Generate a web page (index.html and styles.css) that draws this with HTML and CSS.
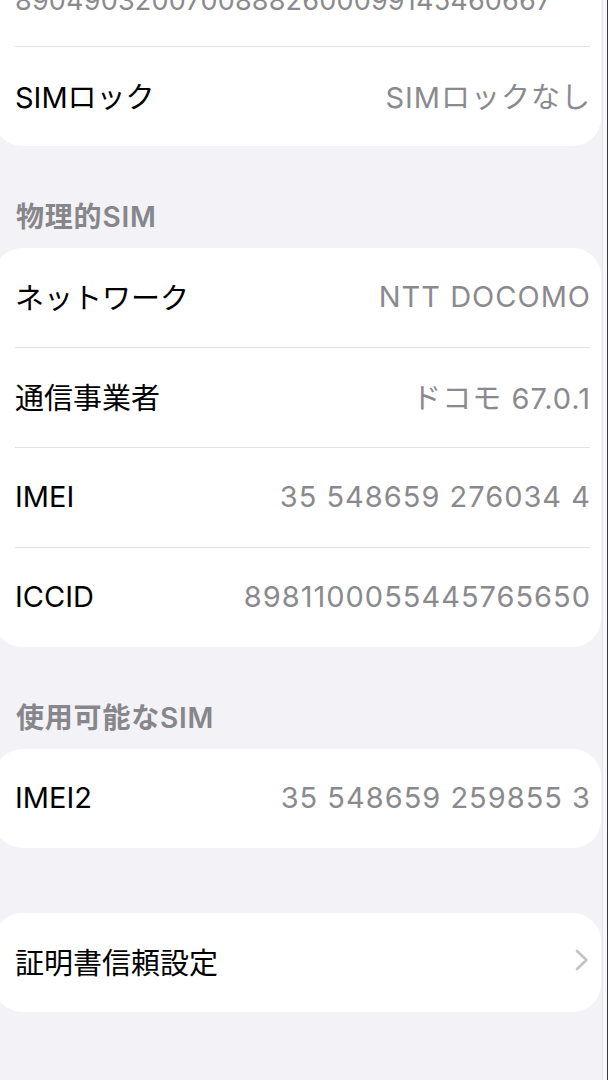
FILE: index.html
```html
<!DOCTYPE html>
<html lang="ja">
<head>
<meta charset="utf-8">
<title>情報</title>
<link rel="stylesheet" href="styles.css">
</head>
<body>
<div class="page">
  <div class="card card-first">
    <div class="eid-tail">89049032007008882600099145460667</div>
    <div class="sep"></div>
    <div class="row"><span class="label">SIMロック</span><span class="value">SIMロックなし</span></div>
  </div>

  <div class="header">物理的SIM</div>
  <div class="card">
    <div class="row"><span class="label">ネットワーク</span><span class="value">NTT DOCOMO</span></div>
    <div class="sep"></div>
    <div class="row"><span class="label">通信事業者</span><span class="value">ドコモ 67.0.1</span></div>
    <div class="sep"></div>
    <div class="row"><span class="label">IMEI</span><span class="value">35 548659 276034 4</span></div>
    <div class="sep"></div>
    <div class="row"><span class="label">ICCID</span><span class="value">8981100055445765650</span></div>
  </div>

  <div class="header">使用可能なSIM</div>
  <div class="card">
    <div class="row"><span class="label">IMEI2</span><span class="value">35 548659 259855 3</span></div>
  </div>

  <div class="spacer"></div>
  <div class="card">
    <div class="row"><span class="label">証明書信頼設定</span>
      <svg class="chev" width="14" height="22" viewBox="0 0 14 22"><path d="M2 2 L11.5 11 L2 20" fill="none" stroke="#c4c4c7" stroke-width="2.6" stroke-linecap="round" stroke-linejoin="round"/></svg>
    </div>
  </div>
</div>
<div class="edge"></div>
</body>
</html>
```
FILE: styles.css
```css
html, body {
  margin: 0;
  padding: 0;
  height: 100%;
  overflow: hidden;
}
body {
  display: flex;
  background: #f2f2f7;
  font-family: "Inter", "Noto Sans CJK JP", sans-serif;
  -webkit-font-smoothing: antialiased;
}
.page {
  width: 602px;
  flex: none;
  overflow: hidden;
  height: 1080px;
  background: #f2f2f7;
}
.edge {
  flex: 1;
  background: #f8f8fa;
  border-left: 1px solid #e4e4e8;
  border-right: 1px solid #3a3a3c;
}
.card {
  background: #fff;
  margin-left: -6px;
  margin-right: 1px;
  border-radius: 28px;
  overflow: hidden;
}
.card-first {
  border-top-left-radius: 0;
  border-top-right-radius: 0;
}
.eid-tail {
  height: 46px;
  box-sizing: border-box;
  padding-left: 21px;
  font-size: 27px;
  line-height: 20px;
  color: #8a8a8e;
  overflow: hidden;
  white-space: nowrap;
  display: flex;
  align-items: flex-end;
  padding-bottom: 35px;
  letter-spacing: 0.2px;
}
.row {
  height: 99px;
  box-sizing: border-box;
  display: flex;
  align-items: center;
  justify-content: space-between;
  padding: 0 11px 3px 21px;
  font-size: 29px;
}
.label {
  color: #000;
}
.value {
  color: #8a8a8e;
  letter-spacing: 1px;
  margin-right: -1px;
}
.sep {
  height: 1px;
  background: #e3e3e6;
  margin: 0 11px 0 21px;
}
.header {
  height: 102px;
  box-sizing: border-box;
  padding: 54px 16px 14px;
  font-size: 28px;
  line-height: 34px;
  font-weight: 600;
  letter-spacing: 0.8px;
  color: #86868b;
}
.spacer {
  height: 65px;
}
.chev {
  display: block;
  margin-right: 1px;
  margin-top: -3px;
}
```
